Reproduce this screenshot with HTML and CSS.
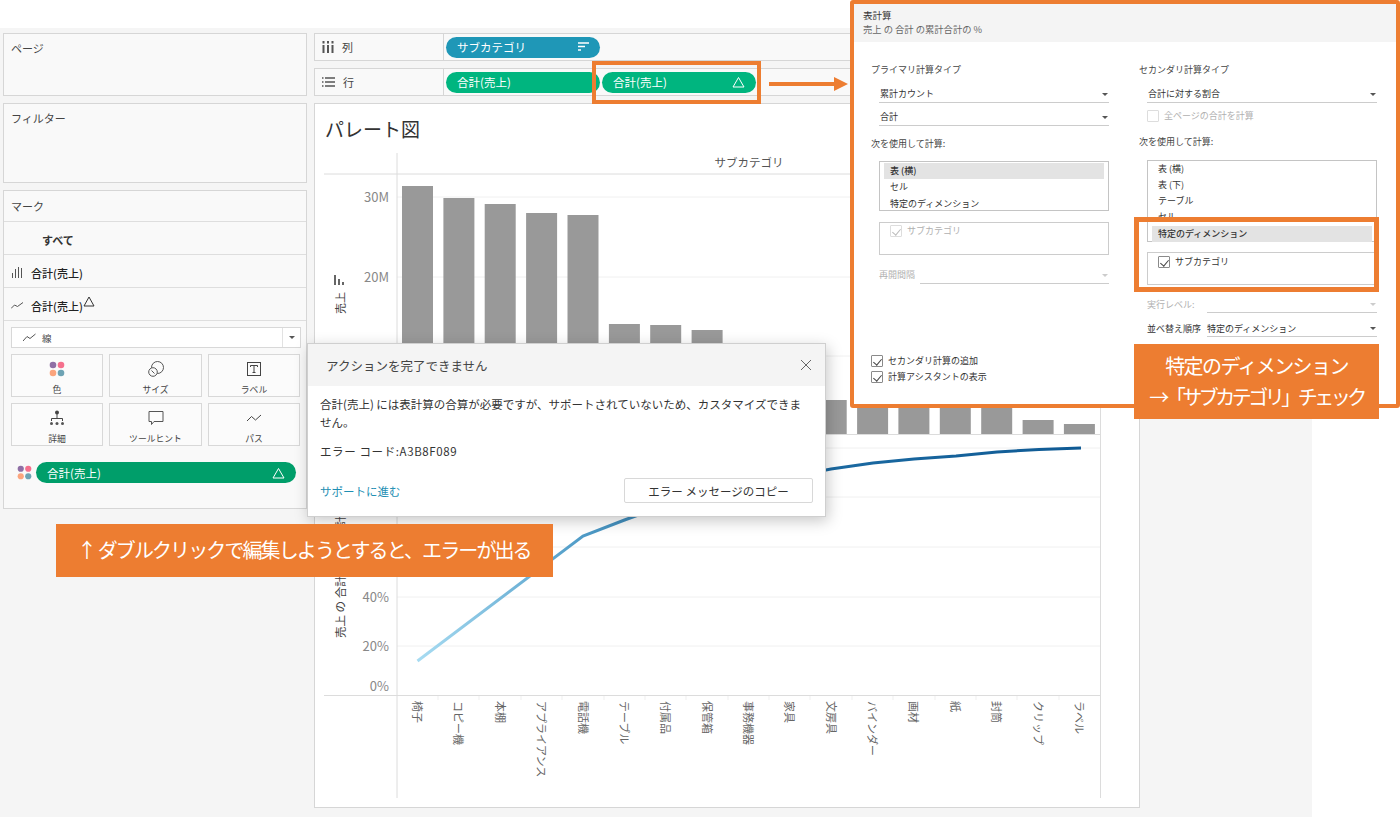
FILE: index.html
```html
<!DOCTYPE html>
<html lang="ja">
<head>
<meta charset="utf-8">
<title>パレート図</title>
<link rel="stylesheet" href="styles.css">
</head>
<body>
<div class="workspace">
  <aside class="side">
    <section class="card card-page"><h3 class="card-title">ページ</h3></section>
    <section class="card card-filter"><h3 class="card-title">フィルター</h3></section>
    <section class="card card-marks">
      <div class="mark-row mark-head">マーク</div>
      <div class="mark-row mark-all"><span>すべて</span></div>
      <div class="mark-row mark-item">
        <svg class="mark-ico" width="12" height="12" viewBox="0 0 12 12"><path d="M1.500 12V7M4.500 12V3M7.500 12V1M10.500 12V2" stroke="#555" fill="none"/></svg>
        <span>合計(売上)</span>
      </div>
      <div class="mark-row mark-item">
        <svg class="mark-ico" width="12" height="12" viewBox="0 0 12 12"><path d="M0 9.500 3.500 6 6.500 7.500 12 3.500" stroke="#555" fill="none"/></svg>
        <span>合計(売上)</span>
        <svg class="mark-delta" width="12" height="11" viewBox="0 0 12 11"><path d="M6 1 11 10H1Z" stroke="#333" fill="none"/></svg>
      </div>
      <div class="mark-body">
        <div class="type-select">
          <div class="type-label">
            <svg width="13" height="9" viewBox="0 0 13 9"><path d="M0 8 4 3.500 7 5.500 12.500 1" stroke="#555" fill="none"/></svg>
            <span>線</span>
          </div>
          <div class="type-arrow"><i class="caret"></i></div>
        </div>
        <div class="mark-grid">
          <div class="mark-btn">
            <svg width="16" height="16" viewBox="0 0 16 16"><circle cx="4" cy="4" r="3.300" fill="#8f6fa5"/><circle cx="12" cy="4" r="3.300" fill="#f5708d"/><circle cx="4" cy="12" r="3.300" fill="#fba57e"/><circle cx="12" cy="12" r="3.300" fill="#6ea3b4"/></svg>
            <span>色</span>
          </div>
          <div class="mark-btn">
            <svg width="16" height="16" viewBox="0 0 16 16"><circle cx="9.500" cy="6.500" r="6" stroke="#555" fill="none"/><circle cx="5" cy="11" r="4.300" stroke="#555" fill="#fafafa"/><path d="M3.500 9.500 6.500 12.500" stroke="#555"/></svg>
            <span>サイズ</span>
          </div>
          <div class="mark-btn">
            <svg width="16" height="16" viewBox="0 0 16 16"><rect x="1.500" y="1.500" width="13" height="13" stroke="#444" fill="none"/><path d="M4.500 4.500H11.500M4.500 4.500V6M11.500 4.500V6M8 4.500V11.500M6.500 11.500H9.500" stroke="#444" fill="none"/></svg>
            <span>ラベル</span>
          </div>
          <div class="mark-btn">
            <svg width="16" height="16" viewBox="0 0 16 16"><circle cx="8" cy="2.500" r="2" fill="#444"/><path d="M8 4V9M2.500 11V8.500H13.500V11" stroke="#444" fill="none"/><circle cx="2.500" cy="13.500" r="1.500" fill="#555"/><circle cx="8" cy="13.500" r="1.500" fill="#555"/><circle cx="13.500" cy="13.500" r="1.500" fill="#555"/></svg>
            <span>詳細</span>
          </div>
          <div class="mark-btn">
            <svg width="16" height="16" viewBox="0 0 16 16"><path d="M1 1.500H15V11.500H6L3.500 14.500V11.500H1Z" stroke="#555" fill="none"/></svg>
            <span>ツールヒント</span>
          </div>
          <div class="mark-btn">
            <svg width="16" height="16" viewBox="0 0 16 16"><path d="M1 11 5.500 6.500 9.500 10 15 5" stroke="#444" fill="none"/></svg>
            <span>パス</span>
          </div>
        </div>
        <div class="color-pill-row">
          <svg width="15" height="15" viewBox="0 0 16 16"><circle cx="4" cy="4" r="3.300" fill="#8f6fa5"/><circle cx="12" cy="4" r="3.300" fill="#f5708d"/><circle cx="4" cy="12" r="3.300" fill="#fba57e"/><circle cx="12" cy="12" r="3.300" fill="#6ea3b4"/></svg>
          <div class="pill pill-mark">
            <span>合計(売上)</span>
            <svg width="13" height="12" viewBox="0 0 13 12"><path d="M6.500 1.500 12 11H1Z" stroke="#fff" fill="none"/></svg>
          </div>
        </div>
      </div>
    </section>
  </aside>

  <main class="main">
    <div class="shelf">
      <div class="shelf-label">
        <svg width="12" height="12" viewBox="0 0 12 12"><path d="M1.500 4V12M6 4V12M10.500 4V12M1.500 0V2.500M6 0V2.500M10.500 0V2.500" stroke="#555" stroke-width="2" fill="none"/></svg>
        <span>列</span>
      </div>
      <div class="shelf-pills">
        <div class="pill pill-dim">
          <span>サブカテゴリ</span>
          <svg width="11" height="10" viewBox="0 0 11 10"><path d="M0 1H11M0 4.500H7M0 8H3" stroke="#fff" stroke-width="1.500" fill="none"/></svg>
        </div>
      </div>
    </div>
    <div class="shelf">
      <div class="shelf-label">
        <svg width="13" height="12" viewBox="0 0 13 12"><path d="M3 2H13M3 6H13M3 10H13M0 2H1.500M0 6H1.500M0 10H1.500" stroke="#555" stroke-width="1.500" fill="none"/></svg>
        <span>行</span>
      </div>
      <div class="shelf-pills">
        <div class="pill pill-mea"><span>合計(売上)</span></div>
        <div class="pill pill-mea">
          <span>合計(売上)</span>
          <svg width="13" height="12" viewBox="0 0 13 12"><path d="M6.500 1.500 12 11H1Z" stroke="#fff" fill="none"/></svg>
        </div>
      </div>
    </div>
    <section class="chart-card">
      <h1 class="chart-title">パレート図</h1>
      <svg class="chart" width="826" height="658" viewBox="314 150 826 658">
        <defs>
          <linearGradient id="pareto" gradientUnits="userSpaceOnUse" x1="417" y1="0" x2="1081" y2="0">
            <stop offset="0" stop-color="#a8dcf2"/>
            <stop offset="0.25" stop-color="#4f9bc7"/>
            <stop offset="0.5" stop-color="#1f6fa6"/>
            <stop offset="1" stop-color="#0f5a94"/>
          </linearGradient>
        </defs>
        <g class="grid">
          <path d="M397 197H1101M397 277H1101M397 356H1101"/>
          <path d="M397 448H1101M397 497H1101M397 547H1101M397 597H1101M397 646H1101"/>
        </g>
        <g class="bars">
          <rect x="402" y="186" width="31" height="248"/>
          <rect x="443.400" y="198" width="31" height="236"/>
          <rect x="484.700" y="204" width="31" height="230"/>
          <rect x="526.100" y="213" width="31" height="221"/>
          <rect x="567.500" y="215" width="31" height="219"/>
          <rect x="608.900" y="324" width="31" height="110"/>
          <rect x="650.200" y="325" width="31" height="109"/>
          <rect x="691.600" y="330" width="31" height="104"/>
          <rect x="733" y="350" width="31" height="84"/>
          <rect x="774.300" y="380" width="31" height="54"/>
          <rect x="815.700" y="400" width="31" height="34"/>
          <rect x="857.100" y="402" width="31" height="32"/>
          <rect x="898.400" y="403" width="31" height="31"/>
          <rect x="939.800" y="403" width="31" height="31"/>
          <rect x="981.200" y="404" width="31" height="30"/>
          <rect x="1022.600" y="420" width="31" height="14"/>
          <rect x="1063.900" y="424" width="31" height="10"/>
        </g>
        <g class="axes">
          <path d="M397 153V798M1100.500 174V798M324 174H1101M324 434.500H1101M324 695.500H1101"/>
        </g>
        <path class="cat-ticks" d="M438 696V700M479 696V700M521 696V700M562 696V700M604 696V700M645 696V700M686 696V700M728 696V700M769 696V700M810 696V700M852 696V700M893 696V700M935 696V700M976 696V700M1017 696V700M1059 696V700"/>
        <path class="pareto" d="M417.500 661 583 536 624.500 520 666 505 707 495 749 486 790 477 831 469 873 463 914 459 956 456 997 452 1039 449.500 1081 448"/>
        <text class="chart-head" x="749" y="167" text-anchor="middle">サブカテゴリ</text>
        <g class="ticks" text-anchor="end">
          <text x="389" y="202">30M</text>
          <text x="389" y="282">20M</text>
          <text x="389" y="691">0%</text>
          <text x="389" y="651">20%</text>
          <text x="389" y="602">40%</text>
        </g>
        <text class="axis-title axis-title-top" transform="translate(345 314) rotate(-90)">売上</text>
        <path class="axis-sort" d="M335 275V285M339 279V285M343 282V285"/>
        <text class="axis-title" transform="translate(345 638) rotate(-90)">売上 の 合計 の累計合計の %</text>
        <g class="cats">
          <text transform="translate(413 701) rotate(90)">椅子</text>
          <text transform="translate(454 701) rotate(90)">コピー機</text>
          <text transform="translate(496 701) rotate(90)">本棚</text>
          <text transform="translate(537 701) rotate(90)">アプライアンス</text>
          <text transform="translate(579 701) rotate(90)">電話機</text>
          <text transform="translate(620 701) rotate(90)">テーブル</text>
          <text transform="translate(661 701) rotate(90)">付属品</text>
          <text transform="translate(703 701) rotate(90)">保管箱</text>
          <text transform="translate(744 701) rotate(90)">事務機器</text>
          <text transform="translate(785 701) rotate(90)">家具</text>
          <text transform="translate(827 701) rotate(90)">文房具</text>
          <text transform="translate(868 701) rotate(90)">バインダー</text>
          <text transform="translate(909 701) rotate(90)">画材</text>
          <text transform="translate(951 701) rotate(90)">紙</text>
          <text transform="translate(992 701) rotate(90)">封筒</text>
          <text transform="translate(1034 701) rotate(90)">クリップ</text>
          <text transform="translate(1075 701) rotate(90)">ラベル</text>
        </g>
      </svg>
    </section>
  </main>
</div>

<div class="pill-frame"></div>
<svg class="flow-arrow" width="80" height="16" viewBox="0 0 80 16"><path d="M0 8H66" stroke="#ed7d31" stroke-width="4"/><path d="M65 1 79 8 65 15Z" fill="#ed7d31"/></svg>

<div class="error-dialog">
  <div class="error-head">
    <span>アクションを完了できません</span>
    <svg width="12" height="12" viewBox="0 0 12 12"><path d="M1 1 11 11M11 1 1 11" stroke="#666" fill="none"/></svg>
  </div>
  <div class="error-body">
    <p class="error-msg">合計(売上) には表計算の合算が必要ですが、サポートされていないため、カスタマイズできません。</p>
    <p class="error-code">エラー コード:A3B8F089</p>
    <div class="error-foot">
      <span class="error-link">サポートに進む</span>
      <div class="error-btn">エラー メッセージのコピー</div>
    </div>
  </div>
</div>

<div class="note note-left">↑ ダブルクリックで編集しようとすると、エラーが出る</div>

<div class="calc">
  <div class="calc-head">
    <div class="calc-title">表計算</div>
    <div class="calc-sub">売上 の 合計 の累計合計の %</div>
  </div>
  <div class="calc-cols">
    <div class="calc-col">
      <div class="calc-label calc-label-first">プライマリ計算タイプ</div>
      <div class="calc-select calc-select-first"><span>累計カウント</span><i class="caret"></i></div>
      <div class="calc-select calc-select-next"><span>合計</span><i class="caret"></i></div>
      <div class="calc-label calc-label-use">次を使用して計算:</div>
      <div class="list list-short">
        <div class="list-item is-selected">表 (横)</div>
        <div class="list-item">セル</div>
        <div class="list-item">特定のディメンション</div>
      </div>
      <div class="dim-box dim-box-left">
        <label class="check-row is-off"><i class="chk"></i><span>サブカテゴリ</span></label>
      </div>
      <div class="calc-field calc-field-restart is-off"><span class="field-name">再開間隔</span><div class="field-value"><span></span><i class="caret"></i></div></div>
      <div class="calc-checks">
        <label class="check-row"><i class="chk"></i><span>セカンダリ計算の追加</span></label>
        <label class="check-row"><i class="chk"></i><span>計算アシスタントの表示</span></label>
      </div>
    </div>
    <div class="calc-col">
      <div class="calc-label calc-label-first">セカンダリ計算タイプ</div>
      <div class="calc-select calc-select-first"><span>合計に対する割合</span><i class="caret"></i></div>
      <label class="check-row check-all is-off"><i class="chk chk-empty"></i><span>全ページの合計を計算</span></label>
      <div class="calc-label calc-label-use2">次を使用して計算:</div>
      <div class="list list-tall">
        <div class="list-item">表 (横)</div>
        <div class="list-item">表 (下)</div>
        <div class="list-item">テーブル</div>
        <div class="list-item">セル</div>
        <div class="list-item is-selected">特定のディメンション</div>
      </div>
      <div class="dim-box dim-box-right">
        <label class="check-row"><i class="chk"></i><span>サブカテゴリ</span></label>
      </div>
      <div class="calc-field calc-field-level is-off"><span class="field-name">実行レベル:</span><div class="field-value"><span></span><i class="caret"></i></div></div>
      <div class="calc-field calc-field-sort"><span class="field-name">並べ替え順序</span><div class="field-value"><span>特定のディメンション</span><i class="caret"></i></div></div>
    </div>
  </div>
</div>

<div class="calc-frame"></div>
<div class="note note-right">
  <div class="note-line1">特定のディメンション</div>
  <div class="note-line2">→「サブカテゴリ」チェック</div>
</div>
</body>
</html>
```
FILE: styles.css
```css
* { box-sizing: border-box; }
html, body { margin: 0; padding: 0; }
body {
  width: 1400px;
  height: 817px;
  position: relative;
  overflow: hidden;
  background: #fff;
  color: #333;
  font-family: "Noto Sans CJK JP", "Noto Sans", sans-serif;
  font-size: 11px;
}
h1, h3, p { margin: 0; font-weight: 400; }

.workspace {
  margin-top: 28px;
  width: 1312px;
  height: 789px;
  padding: 5px 0 0 3px;
  background: #f5f5f5;
  display: grid;
  grid-template-columns: 304px 826px;
  column-gap: 7px;
  align-items: start;
}

/* left rail */
.side { display: flex; flex-direction: column; gap: 7px; }
.card { background: #f9f9f9; border: 1px solid #d6d6d6; }
.card-page { height: 63px; }
.card-filter { height: 80px; }
.card-marks { height: 319px; }
.card-title { font-size: 11px; line-height: 16px; padding: 6px 7px 0; color: #444; }

.mark-row { display: flex; align-items: center; border-bottom: 1px solid #dedede; }
.mark-head { height: 31px; padding-left: 7px; color: #444; }
.mark-all { height: 33px; padding: 3px 0 0 38px; font-weight: 700; color: #333; }
.mark-item { height: 33px; padding: 3px 0 0 7px; gap: 8px; font-size: 11px; color: #222; font-weight: 500; }
.mark-ico { flex: none; margin-top: -2px; }
.mark-delta { margin: -9px 0 0 -8px; }
.mark-body { padding: 6px 6px 0 6px; }

.type-select { height: 21px; width: 290px; margin-left: 1px; background: #fff; border: 1px solid #d8d8d8; display: flex; justify-content: space-between; }
.type-label { display: flex; align-items: center; gap: 6px; padding-left: 11px; font-size: 9.500px; color: #444; }
.type-arrow { width: 18px; border-left: 1px solid #e2e2e2; display: flex; align-items: center; justify-content: center; }

.caret { display: block; width: 0; height: 0; border-left: 3px solid transparent; border-right: 3px solid transparent; border-top: 3px solid #555; flex: none; }

.mark-grid { display: grid; grid-template-columns: 92px 93px 92px; grid-auto-rows: 43px; column-gap: 6px; row-gap: 6px; margin: 6px 0 0 1px; width: 291px; }
.mark-btn { background: #fbfbfb; border: 1px solid #d8d8d8; display: flex; flex-direction: column; align-items: center; gap: 7px; padding-top: 6px; font-size: 8.800px; color: #444; line-height: 11px; }
.color-pill-row { display: flex; align-items: center; gap: 4px; margin: 16px 0 0 7px; }

/* pills */
.pill { height: 21px; border-radius: 11px; color: #fff; display: flex; align-items: center; justify-content: space-between; padding: 0 11px 0 11px; font-size: 11.500px; }
.pill-mark { width: 260px; background: #009e6a; }
.pill-dim { width: 154px; background: #1f97b7; }
.pill-mea { width: 154px; background: #00b57f; }

/* shelves */
.main { display: flex; flex-direction: column; gap: 7px; }
.shelf { height: 28px; background: #f9f9f9; border: 1px solid #d6d6d6; display: flex; }
.shelf-label { width: 129px; border-right: 1px solid #d6d6d6; display: flex; align-items: center; gap: 8px; padding-left: 7px; color: #444; font-size: 11px; }
.shelf-pills { display: flex; align-items: center; gap: 2px; padding-left: 2px; }

/* chart */
.chart-card { height: 705px; background: #fff; border: 1px solid #d6d6d6; position: relative; }
.chart-title { height: 46px; padding: 12px 0 0 10px; font-size: 19px; line-height: 26px; color: #333; }
.chart { display: block; margin: 0 -1px; }
.grid path { stroke: #f0f0f0; fill: none; }
.bars rect { fill: #999; }
.axes path { stroke: #dcdcdc; fill: none; }
.cat-ticks { stroke: #efefef; fill: none; }
.pareto { fill: none; stroke: url(#pareto); stroke-width: 3; }
.chart text { font-family: "Noto Sans CJK JP", sans-serif; }
.chart-head { font-size: 11.500px; fill: #555; }
.ticks text { font-size: 13px; fill: #888; }
.axis-title { font-size: 11.500px; fill: #444; }
.axis-title-top { font-size: 11px; }
.axis-sort { stroke: #666; stroke-width: 2; fill: none; }
.cats text { font-size: 11px; fill: #666; }

/* orange annotations */
.pill-frame { position: absolute; left: 592px; top: 61px; width: 169px; height: 43px; border: 4px solid #ed7d31; }
.flow-arrow { position: absolute; left: 769px; top: 76px; }
.note { position: absolute; background: #ed7d31; color: #fff; }
.note-left { left: 56px; top: 524px; width: 497px; height: 53px; padding-left: 21px; font-size: 20px; line-height: 52px; letter-spacing: -1.900px; white-space: nowrap; }
.note-right { left: 1134px; top: 344px; width: 245px; height: 75px; text-align: center; padding-top: 6px; font-size: 20px; line-height: 31px; white-space: nowrap; }
.note-line1 { letter-spacing: -1.600px; }
.note-line2 { letter-spacing: -3.500px; }

/* error dialog */
.error-dialog { position: absolute; left: 307px; top: 343px; width: 519px; height: 174px; background: #fff; border: 1px solid #cfcfcf; box-shadow: 2px 4px 14px rgba(0, 0, 0, .22); }
.error-head { height: 42px; background: #f4f4f4; display: flex; align-items: center; justify-content: space-between; padding: 0 13px 0 18px; font-size: 12.500px; color: #444; }
.error-body { padding: 10px 12px 0 12px; font-size: 11.500px; color: #333; }
.error-msg { line-height: 17.500px; padding-right: 8px; }
.error-code { margin-top: 12px; line-height: 17px; letter-spacing: .6px; }
.error-foot { display: flex; justify-content: space-between; align-items: center; margin-top: 18px; }
.error-link { color: #1f8fb3; }
.error-btn { width: 189px; height: 25px; border: 1px solid #d8d8d8; display: flex; align-items: center; justify-content: center; border-radius: 2px; font-size: 11.500px; }

/* table calculation dialog */
.calc { position: absolute; left: 850px; top: 0; width: 550px; height: 408px; background: #fff; border: 4px solid #ed7d31; border-radius: 3px; font-size: 9px; color: #333; display: flex; flex-direction: column; }
.calc-head { height: 38px; background: #f4f4f4; padding: 5px 0 0 9px; flex: none; }
.calc-title { font-size: 9.500px; line-height: 13px; color: #333; }
.calc-sub { font-size: 9.300px; line-height: 14px; color: #666; }
.calc-cols { flex: 1; display: grid; grid-template-columns: 268px 1fr; padding: 0 0 0 17px; }
.calc-col { display: flex; flex-direction: column; width: 238px; }
.calc-label { line-height: 14px; height: 14px; color: #444; }
.calc-label-first { margin-top: 21px; }
.calc-label-use { margin-top: 11px; }
.calc-label-use2 { margin-top: 11px; }
.calc-select { margin-left: 8px; width: 230px; height: 17px; border-bottom: 1px solid #ccc; display: flex; align-items: center; justify-content: space-between; padding: 0 1px; line-height: 14px; }
.calc-select-first { margin-top: 9px; }
.calc-select-next { margin-top: 6px; }
.list { margin-left: 8px; width: 230px; border: 1px solid #c4c4c4; padding: 0 4px; flex: none; }
.list-short { height: 50px; margin-top: 10px; padding-top: 1px; }
.list-tall { height: 82px; margin-top: 11px; }
.list-tall .list-item { height: 16px; }
.list-tall .is-selected { margin-top: 1px; }
.list-item { height: 16.300px; line-height: 15px; padding-left: 6px; }
.list-item.is-selected { background: #e3e3e3; font-weight: 500; }
.dim-box { margin: 11px 0 0 8px; width: 230px; border: 1px solid #ccc; height: 33px; padding: 0 0 0 10px; }
.dim-box-right { margin-top: 10px; padding-top: 1px; }
.check-row { display: flex; align-items: center; gap: 5px; height: 16px; line-height: 12px; }
.chk { display: block; width: 12px; height: 12px; border: 1px solid #8a8a8a; position: relative; flex: none; border-radius: 1px; }
.chk::after { content: ""; position: absolute; left: 3px; top: 1px; width: 4px; height: 7px; border-right: 1px solid #444; border-bottom: 1px solid #444; transform: rotate(40deg); }
.chk-empty::after { display: none; }
.is-off { color: #b0b0b0; }
.is-off .chk { border-color: #ddd; }
.is-off .chk::after { border-color: #bbb; }
.is-off .caret { border-top-color: #ccc; }
.check-all { margin: 5px 0 0 8px; }
.calc-field { display: flex; margin-left: 8px; width: 230px; align-items: flex-end; height: 17px; }
.field-name { line-height: 16px; flex: none; width: 41px; white-space: nowrap; }
.field-value { flex: 1; height: 17px; border-bottom: 1px solid #ccc; display: flex; align-items: center; justify-content: space-between; padding-right: 1px; }
.calc-field-level .field-name, .calc-field-sort .field-name { width: 60px; }
.calc-field-restart { margin-top: 12px; }
.calc-field-restart .field-name { padding-bottom: 1px; line-height: 17px; }
.calc-field-level { margin-top: 11px; }
.calc-field-sort { margin-top: 7px; }
.calc-checks { margin-top: auto; margin-bottom: 19px; }
.calc-frame { position: absolute; left: 1134px; top: 217px; width: 245px; height: 75px; border: 5px solid #ed7d31; }
```
